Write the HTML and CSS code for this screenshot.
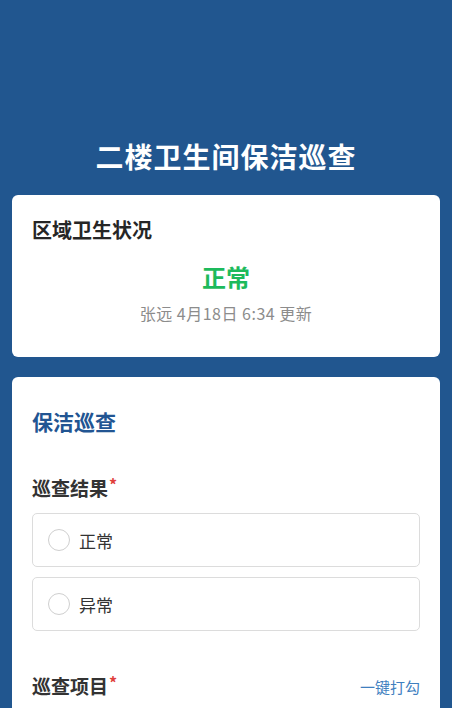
FILE: index.html
```html
<!DOCTYPE html>
<html lang="zh-CN">
<head>
<meta charset="utf-8">
<meta name="viewport" content="width=device-width, initial-scale=1">
<title>二楼卫生间保洁巡查</title>
<link rel="stylesheet" href="styles.css">
</head>
<body>
<div class="page">
  <h1 class="page-title">二楼卫生间保洁巡查</h1>

  <section class="card status-card">
    <h2 class="card-heading">区域卫生状况</h2>
    <div class="status-value">正常</div>
    <div class="status-meta">张远 4月18日 6:34 更新</div>
  </section>

  <section class="card form-card">
    <h2 class="section-title">保洁巡查</h2>

    <div class="field">
      <div class="field-label">巡查结果<span class="req">*</span></div>
      <div class="options">
        <label class="option"><span class="radio"></span><span class="option-text">正常</span></label>
        <label class="option"><span class="radio"></span><span class="option-text">异常</span></label>
      </div>
    </div>

    <div class="field field-items">
      <div class="field-row">
        <div class="field-label">巡查项目<span class="req">*</span></div>
        <a class="link" href="#">一键打勾</a>
      </div>
    </div>
  </section>
</div>
</body>
</html>
```

FILE: styles.css
```css
* { box-sizing: border-box; }
html, body { margin: 0; padding: 0; }
body {
  background: #21568f;
  font-family: "Noto Sans CJK SC", "Noto Sans", sans-serif;
  color: #333;
}
.page {
  padding: 136px 12px 0;
}
.page-title {
  margin: 0 0 19px;
  font-size: 28px;
  line-height: 40px;
  font-weight: 700;
  color: #fff;
  text-align: center;
  letter-spacing: 1px;
}
.card {
  background: #fff;
  border-radius: 6px;
  padding: 0 20px;
}
.status-card {
  padding-top: 21px;
  padding-bottom: 33px;
  margin-bottom: 20px;
}
.card-heading {
  margin: 0;
  font-size: 20px;
  line-height: 28px;
  font-weight: 700;
  color: #262626;
}
.status-value {
  margin-top: 17px;
  text-align: center;
  font-size: 24px;
  line-height: 32px;
  font-weight: 700;
  color: #1dba5c;
}
.status-meta {
  margin-top: 9px;
  text-align: center;
  font-size: 16px;
  line-height: 22px;
  color: #8c8c8c;
  letter-spacing: 0.5px;
}
.form-card {
  padding-top: 29px;
  padding-bottom: 20px;
}
.section-title {
  margin: 0;
  font-size: 21px;
  line-height: 30px;
  font-weight: 700;
  color: #225592;
}
.field { margin-top: 38px; }
.field-items { margin-top: 41px; }
.field-label {
  font-size: 19px;
  line-height: 28px;
  font-weight: 700;
  color: #333;
}
.req {
  color: #e0403c;
  font-size: 16px;
  vertical-align: top;
  margin-left: 1px;
  line-height: 20px;
}
.options {
  margin-top: 11px;
  display: flex;
  flex-direction: column;
  gap: 10px;
}
.option {
  display: flex;
  align-items: center;
  height: 54px;
  border: 1px solid #dcdcdc;
  border-radius: 5px;
  padding-left: 15px;
}
.radio {
  width: 22px;
  height: 22px;
  border: 1px solid #cfcfcf;
  border-radius: 50%;
  flex: none;
}
.option-text {
  margin-left: 9px;
  font-size: 17px;
  color: #333;
}
.field-row {
  display: flex;
  justify-content: space-between;
  align-items: center;
}
.link {
  font-size: 15px;
  color: #3f7fbf;
  text-decoration: none;
}
```
